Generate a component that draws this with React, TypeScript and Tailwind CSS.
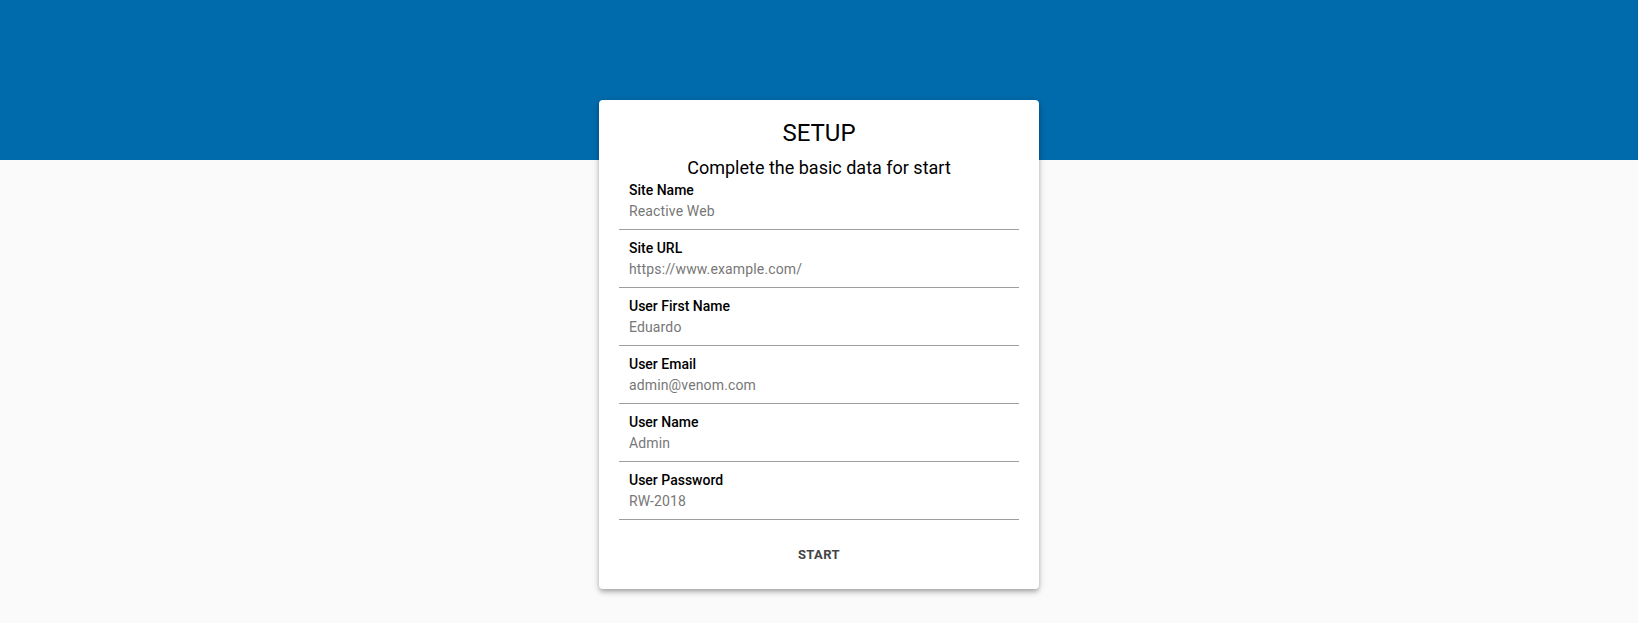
const fields = [
  { label: "Site Name", value: "Reactive Web" },
  { label: "Site URL", value: "https://www.example.com/" },
  { label: "User First Name", value: "Eduardo" },
  { label: "User Email", value: "admin@venom.com" },
  { label: "User Name", value: "Admin" },
  { label: "User Password", value: "RW-2018" },
];

export default function App() {
  return (
    <div className="min-h-screen bg-[#fafafa] font-['Roboto',sans-serif]">
      <div className="h-[160px] bg-[#006bac]" />
      <div className="flex justify-center -mt-[60px]">
        <div className="w-[440px] bg-white rounded shadow-[0_2px_4px_-1px_rgba(0,0,0,0.2),0_4px_5px_0_rgba(0,0,0,0.14),0_1px_10px_0_rgba(0,0,0,0.12)] px-5 pt-[17px] pb-4">
          <h1 className="text-center text-[24px] leading-8 text-black">SETUP</h1>
          <p className="text-center text-[18px] leading-6 text-black mt-[7px]">
            Complete the basic data for start
          </p>
          <form className="-mt-[8px]">
            {fields.map((f) => (
              <div key={f.label} className="border-b border-[#9e9e9e] pt-[10px] pb-2">
                <div className="px-[10px] text-[14px] leading-4 font-medium text-black">{f.label}</div>
                <input
                  readOnly
                  defaultValue={f.value}
                  className="mt-[3px] block w-full px-[10px] text-[14px] tracking-[0.01em] leading-5 h-5 text-[#777] outline-none bg-transparent"
                />
              </div>
            ))}
            <div className="flex justify-center mt-[17px]">
              <button
                type="button"
                className="h-9 px-4 text-[13px] font-bold tracking-[0.03em] text-[#444] uppercase rounded"
              >
                Start
              </button>
            </div>
          </form>
        </div>
      </div>
    </div>
  );
}
